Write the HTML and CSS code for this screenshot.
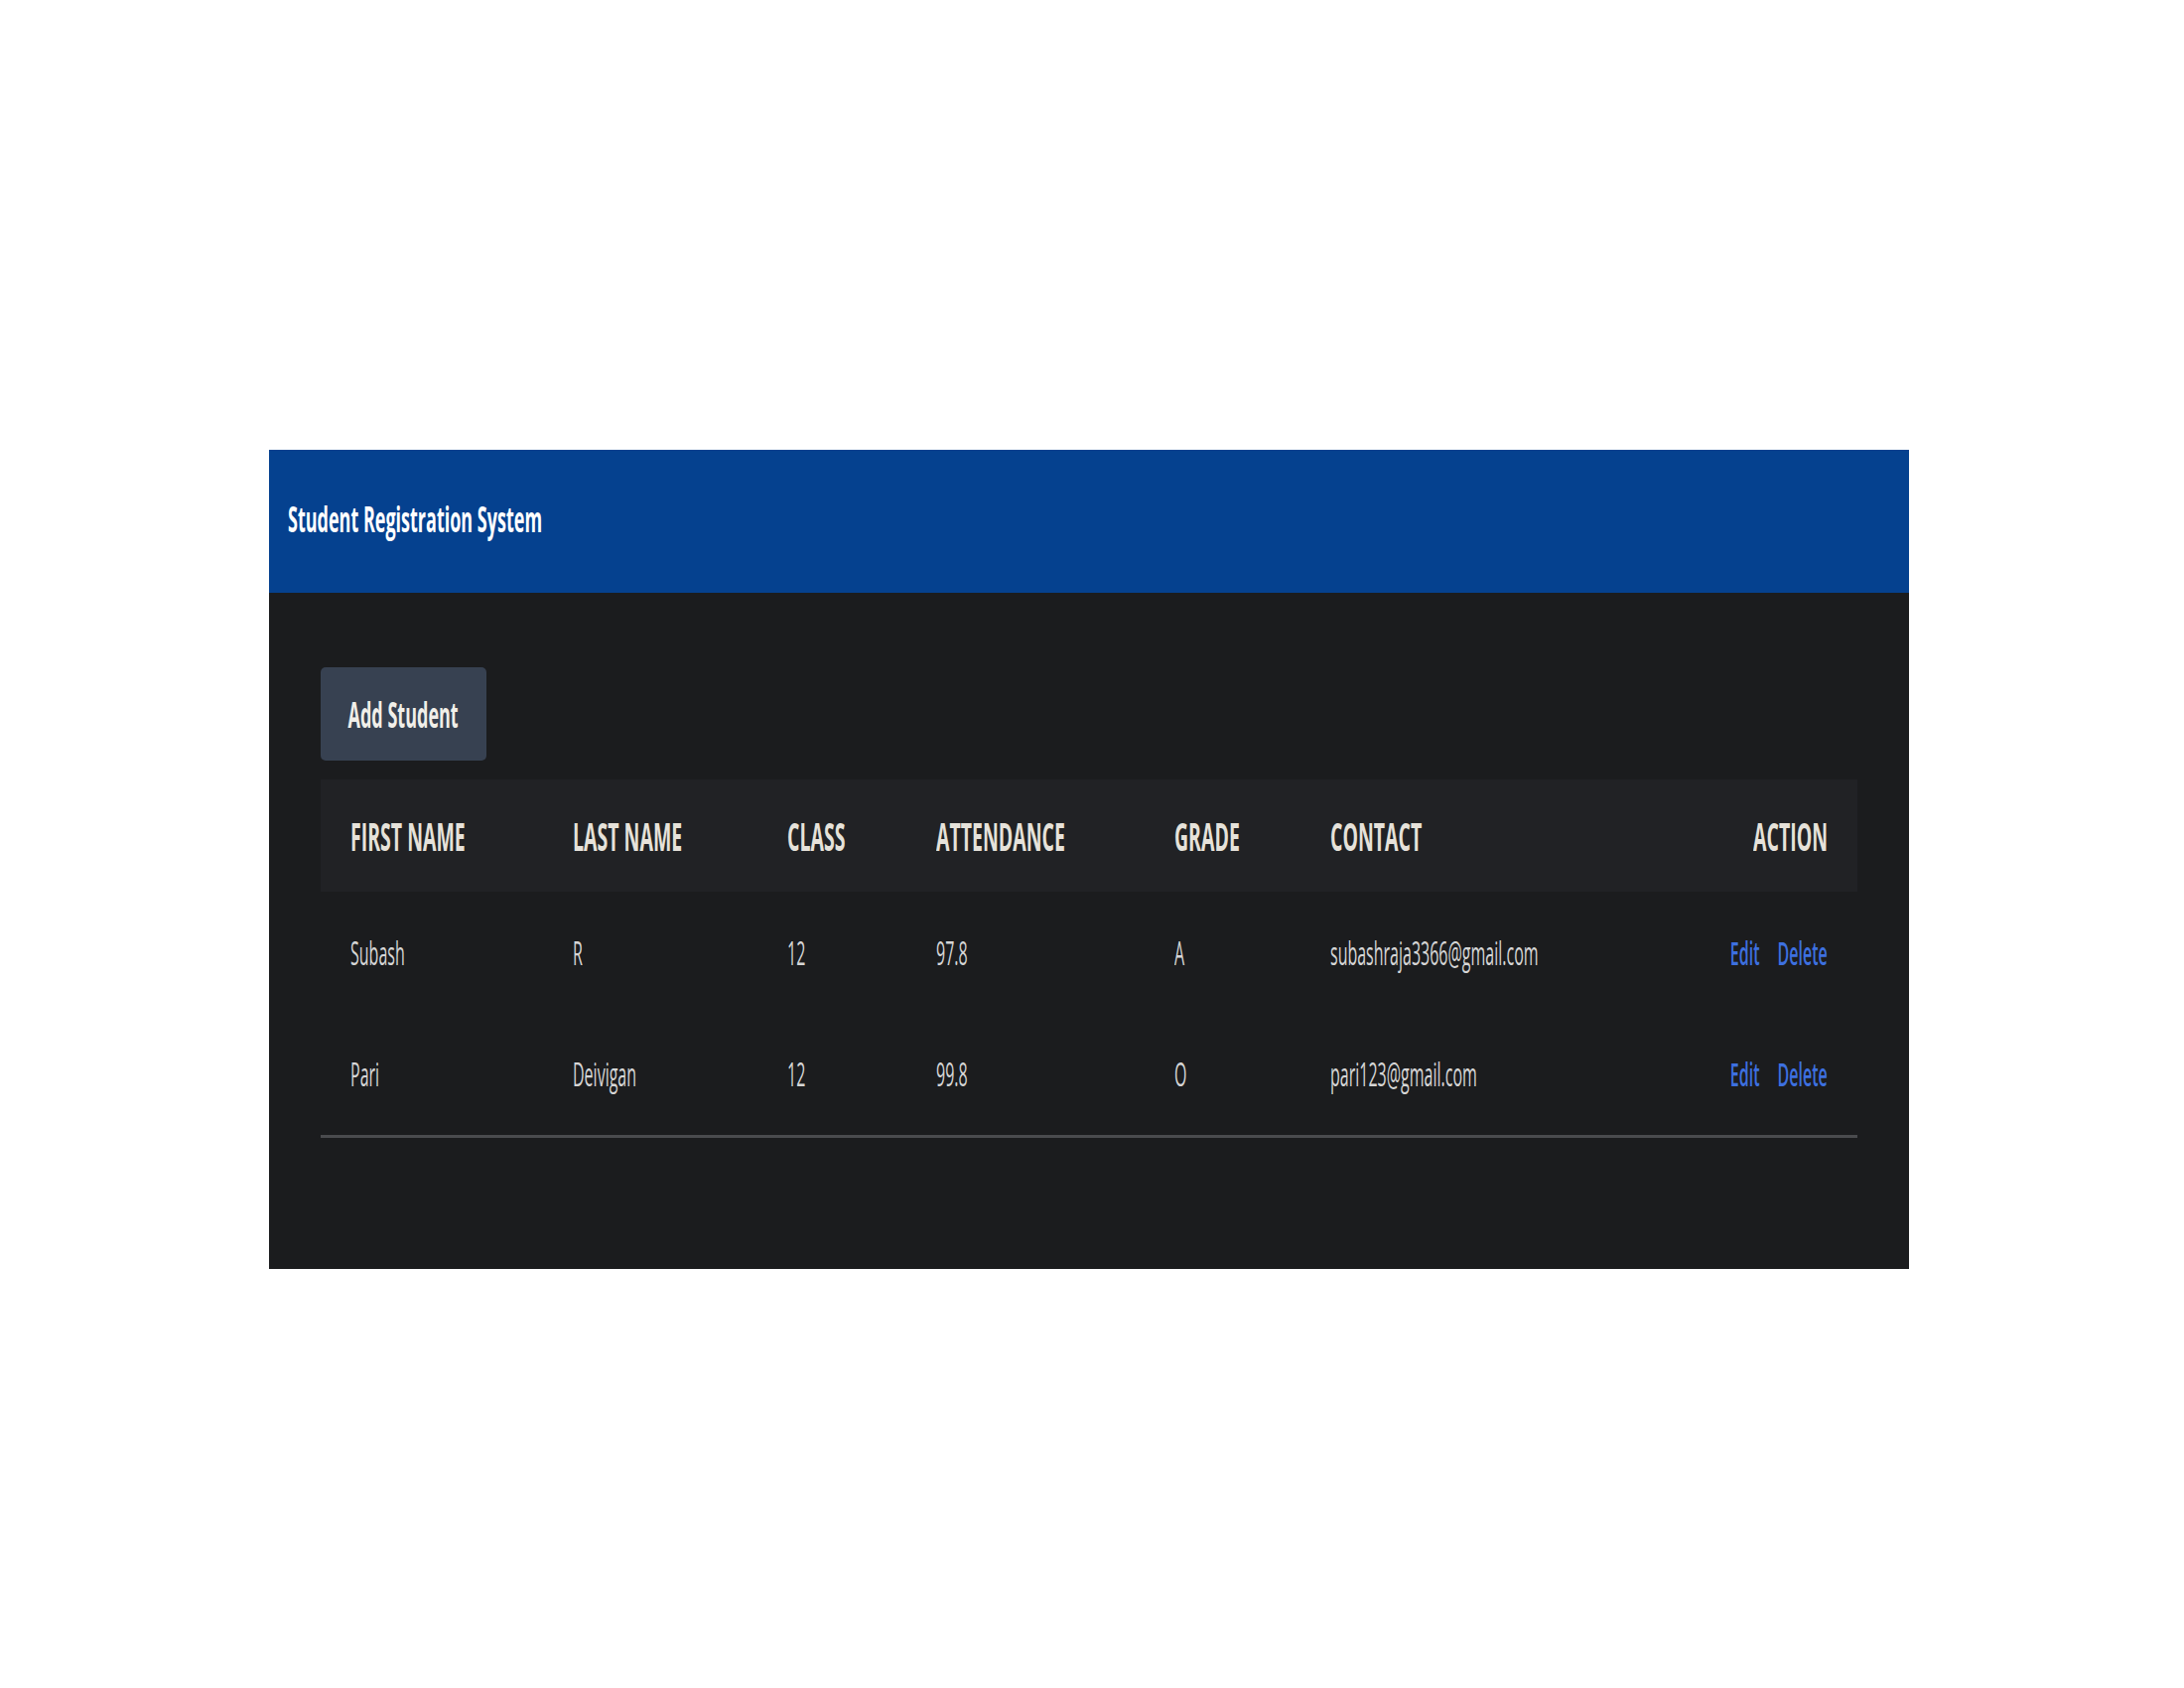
FILE: index.html
```html
<!DOCTYPE html>
<html lang="en">
<head>
<meta charset="utf-8">
<title>Student Registration System</title>
<link rel="stylesheet" href="styles.css">
</head>
<body>
<div class="page">
  <section class="panel">
    <header class="topbar">
      <h1 class="title"><span class="sx">Student Registration System</span></h1>
    </header>
    <div class="content">
      <button class="add-btn" type="button"><span class="sx sx-c">Add Student</span></button>
      <table class="students">
        <colgroup>
          <col class="c1"><col class="c2"><col class="c3"><col class="c4"><col class="c5"><col class="c6"><col class="c7">
        </colgroup>
        <thead>
          <tr>
            <th><span class="sx">FIRST NAME</span></th>
            <th><span class="sx">LAST NAME</span></th>
            <th><span class="sx">CLASS</span></th>
            <th><span class="sx">ATTENDANCE</span></th>
            <th><span class="sx">GRADE</span></th>
            <th><span class="sx">CONTACT</span></th>
            <th class="right"><span class="sx sx-r">ACTION</span></th>
          </tr>
        </thead>
        <tbody>
          <tr>
            <td><span class="sx">Subash</span></td>
            <td><span class="sx">R</span></td>
            <td><span class="sx">12</span></td>
            <td><span class="sx">97.8</span></td>
            <td><span class="sx">A</span></td>
            <td><span class="sx">subashraja3366@gmail.com</span></td>
            <td class="right"><span class="sx sx-r actions"><a href="#" class="link">Edit</a><a href="#" class="link">Delete</a></span></td>
          </tr>
          <tr>
            <td><span class="sx">Pari</span></td>
            <td><span class="sx">Deivigan</span></td>
            <td><span class="sx">12</span></td>
            <td><span class="sx">99.8</span></td>
            <td><span class="sx">O</span></td>
            <td><span class="sx">pari123@gmail.com</span></td>
            <td class="right"><span class="sx sx-r actions"><a href="#" class="link">Edit</a><a href="#" class="link">Delete</a></span></td>
          </tr>
        </tbody>
      </table>
    </div>
  </section>
</div>
</body>
</html>
```

FILE: styles.css
```css
* { box-sizing: border-box; }

html, body {
  margin: 0;
  padding: 0;
  background: #ffffff;
  font-family: "Open Sans", "Noto Sans", "Liberation Sans", sans-serif;
}

.page {
  width: 2200px;
  height: 1700px;
  padding: 453px 0 0 271px;
}

.panel {
  width: 1652px;
  height: 825px;
  background: #1b1c1e;
  display: flex;
  flex-direction: column;
}

.topbar {
  height: 144px;
  background: #05418f;
  display: flex;
  align-items: center;
  padding: 0 0 5px 19px;
}

.title {
  margin: 0;
  font-size: 36px;
  font-weight: 700;
  color: #ffffff;
  line-height: 1;
}

/* horizontally condensed text, as in the reference */
.sx {
  display: inline-block;
  white-space: nowrap;
  transform: scaleX(0.5);
  transform-origin: left center;
}
.sx-c { transform-origin: center center; }
.sx-r { transform-origin: right center; }

.content {
  padding: 75px 52px 0 52px;
  display: flex;
  flex-direction: column;
  align-items: flex-start;
}

.add-btn {
  width: 167px;
  height: 94px;
  margin: 0 0 19px 0;
  padding: 0;
  border: none;
  border-radius: 5px;
  background: #374151;
  color: #f1efe9;
  font-family: inherit;
  font-size: 36px;
  font-weight: 700;
  display: flex;
  align-items: center;
  justify-content: center;
  overflow: visible;
}

.students {
  width: 1548px;
  border-collapse: collapse;
  table-layout: fixed;
  border-bottom: 3px solid #4a4b4e;
}

.c1 { width: 224px; }
.c2 { width: 216px; }
.c3 { width: 150px; }
.c4 { width: 240px; }
.c5 { width: 157px; }
.c6 { width: 270px; }
.c7 { width: 291px; }

.students thead tr {
  background: #212225;
}

.students th {
  height: 113px;
  padding: 0 0 0 30px;
  text-align: left;
  vertical-align: middle;
  font-size: 39px;
  font-weight: 700;
  color: #e6e2da;
  white-space: nowrap;
  overflow: visible;
}

.students td {
  height: 123px;
  padding: 0 0 0 30px;
  vertical-align: middle;
  font-size: 32px;
  font-weight: 400;
  color: #d6d6d6;
  white-space: nowrap;
  overflow: visible;
}

.students .right {
  text-align: right;
  padding: 0 30px 0 0;
}

.actions {
  display: inline-flex;
  gap: 36px;
}

.link {
  color: #3d70e0;
  font-weight: 600;
  text-decoration: none;
}
```
